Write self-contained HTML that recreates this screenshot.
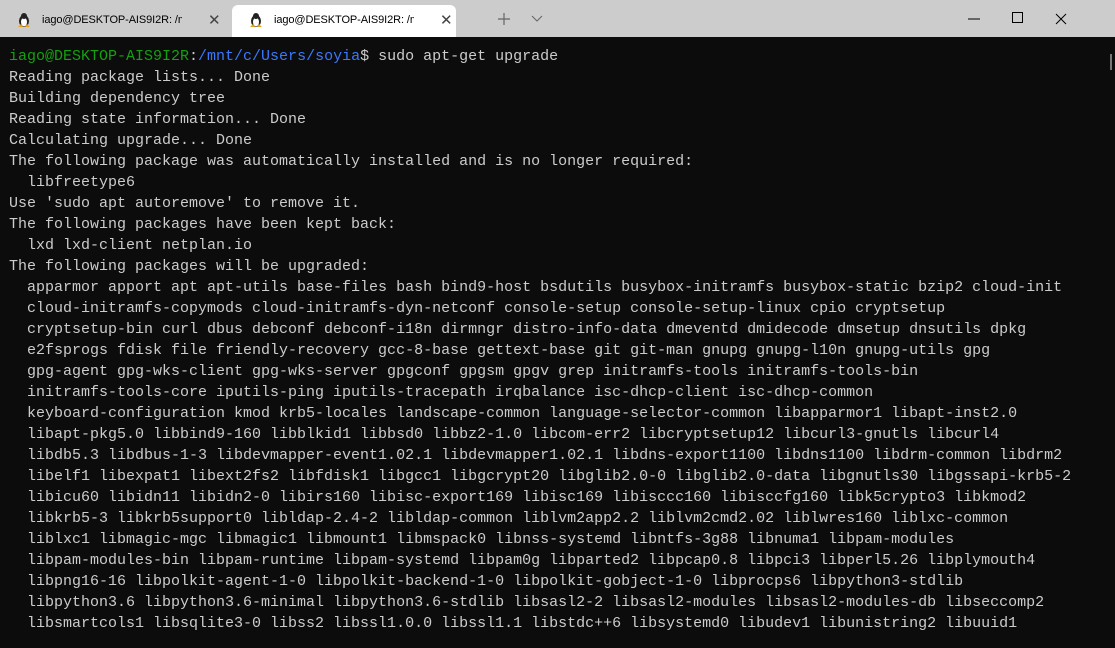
<!DOCTYPE html>
<html><head><meta charset="utf-8"><style>
html,body{margin:0;padding:0;width:1115px;height:648px;overflow:hidden;background:#0c0c0c}
.bar{position:absolute;left:0;top:0;width:1115px;height:37px;background:#cccccc;font-family:"Liberation Sans",sans-serif;font-size:11px;color:#000}
.tab{position:absolute;top:5px;height:32px;width:224px}
.tab.a{background:#fff;border-radius:6px 6px 0 0}
.tab .t{position:absolute;left:42px;top:9px;white-space:nowrap;width:140px;overflow:hidden;letter-spacing:-0.1px}
.tab .x{position:absolute;left:208px;top:6px;font-size:15px;color:#444}
.peng{position:absolute;left:17px;top:7px}
.term{position:absolute;left:9px;top:46px;font-family:"Liberation Mono",monospace;font-size:15px;line-height:21px;color:#cccccc;white-space:pre}
.g{color:#13a10e}.b{color:#3b78ff}
</style></head><body>
<div class="bar">
<div class="tab"><svg class="peng" width="14" height="16" viewBox="0 0 14 16"><ellipse cx="7" cy="9" rx="5" ry="6" fill="#222"/><ellipse cx="7" cy="10" rx="3" ry="4.5" fill="#fff"/><circle cx="7" cy="4" r="3" fill="#222"/><path d="M1 15 L4 12 L6 15Z M8 15 L10 12 L13 15Z" fill="#e8a317"/></svg><div class="t">iago@DESKTOP-AIS9I2R: /mnt/c</div><div class="x">✕</div></div>
<div class="tab a" style="left:232px"><svg class="peng" width="14" height="16" viewBox="0 0 14 16"><ellipse cx="7" cy="9" rx="5" ry="6" fill="#222"/><ellipse cx="7" cy="10" rx="3" ry="4.5" fill="#fff"/><circle cx="7" cy="4" r="3" fill="#222"/><path d="M1 15 L4 12 L6 15Z M8 15 L10 12 L13 15Z" fill="#e8a317"/></svg><div class="t">iago@DESKTOP-AIS9I2R: /mnt/c</div><div class="x">✕</div></div>
<svg style="position:absolute;left:497px;top:12px" width="14" height="14"><path d="M7 1V13M1 7H13" stroke="#666" stroke-width="1.2"/></svg>
<svg style="position:absolute;left:531px;top:15px" width="12" height="8"><path d="M1 1L6 6L11 1" stroke="#666" fill="none"/></svg>
<svg style="position:absolute;left:968px;top:18px" width="12" height="2"><path d="M0 1H12" stroke="#000"/></svg>
<svg style="position:absolute;left:1012px;top:12px" width="12" height="12"><rect x=".5" y=".5" width="10" height="10" fill="none" stroke="#000"/></svg>
<svg style="position:absolute;left:1055px;top:13px" width="12" height="12"><path d="M1 1L11 11M11 1L1 11" stroke="#000"/></svg>
</div>
<div style="position:absolute;left:1110px;top:54px;width:2px;height:16px;background:#777"></div>
<div class="term"><span class="g">iago@DESKTOP-AIS9I2R</span>:<span class="b">/mnt/c/Users/soyia</span>$ sudo apt-get upgrade
Reading package lists... Done
Building dependency tree
Reading state information... Done
Calculating upgrade... Done
The following package was automatically installed and is no longer required:
  libfreetype6
Use 'sudo apt autoremove' to remove it.
The following packages have been kept back:
  lxd lxd-client netplan.io
The following packages will be upgraded:
  apparmor apport apt apt-utils base-files bash bind9-host bsdutils busybox-initramfs busybox-static bzip2 cloud-init
  cloud-initramfs-copymods cloud-initramfs-dyn-netconf console-setup console-setup-linux cpio cryptsetup
  cryptsetup-bin curl dbus debconf debconf-i18n dirmngr distro-info-data dmeventd dmidecode dmsetup dnsutils dpkg
  e2fsprogs fdisk file friendly-recovery gcc-8-base gettext-base git git-man gnupg gnupg-l10n gnupg-utils gpg
  gpg-agent gpg-wks-client gpg-wks-server gpgconf gpgsm gpgv grep initramfs-tools initramfs-tools-bin
  initramfs-tools-core iputils-ping iputils-tracepath irqbalance isc-dhcp-client isc-dhcp-common
  keyboard-configuration kmod krb5-locales landscape-common language-selector-common libapparmor1 libapt-inst2.0
  libapt-pkg5.0 libbind9-160 libblkid1 libbsd0 libbz2-1.0 libcom-err2 libcryptsetup12 libcurl3-gnutls libcurl4
  libdb5.3 libdbus-1-3 libdevmapper-event1.02.1 libdevmapper1.02.1 libdns-export1100 libdns1100 libdrm-common libdrm2
  libelf1 libexpat1 libext2fs2 libfdisk1 libgcc1 libgcrypt20 libglib2.0-0 libglib2.0-data libgnutls30 libgssapi-krb5-2
  libicu60 libidn11 libidn2-0 libirs160 libisc-export169 libisc169 libisccc160 libisccfg160 libk5crypto3 libkmod2
  libkrb5-3 libkrb5support0 libldap-2.4-2 libldap-common liblvm2app2.2 liblvm2cmd2.02 liblwres160 liblxc-common
  liblxc1 libmagic-mgc libmagic1 libmount1 libmspack0 libnss-systemd libntfs-3g88 libnuma1 libpam-modules
  libpam-modules-bin libpam-runtime libpam-systemd libpam0g libparted2 libpcap0.8 libpci3 libperl5.26 libplymouth4
  libpng16-16 libpolkit-agent-1-0 libpolkit-backend-1-0 libpolkit-gobject-1-0 libprocps6 libpython3-stdlib
  libpython3.6 libpython3.6-minimal libpython3.6-stdlib libsasl2-2 libsasl2-modules libsasl2-modules-db libseccomp2
  libsmartcols1 libsqlite3-0 libss2 libssl1.0.0 libssl1.1 libstdc++6 libsystemd0 libudev1 libunistring2 libuuid1</div>
</body></html>
